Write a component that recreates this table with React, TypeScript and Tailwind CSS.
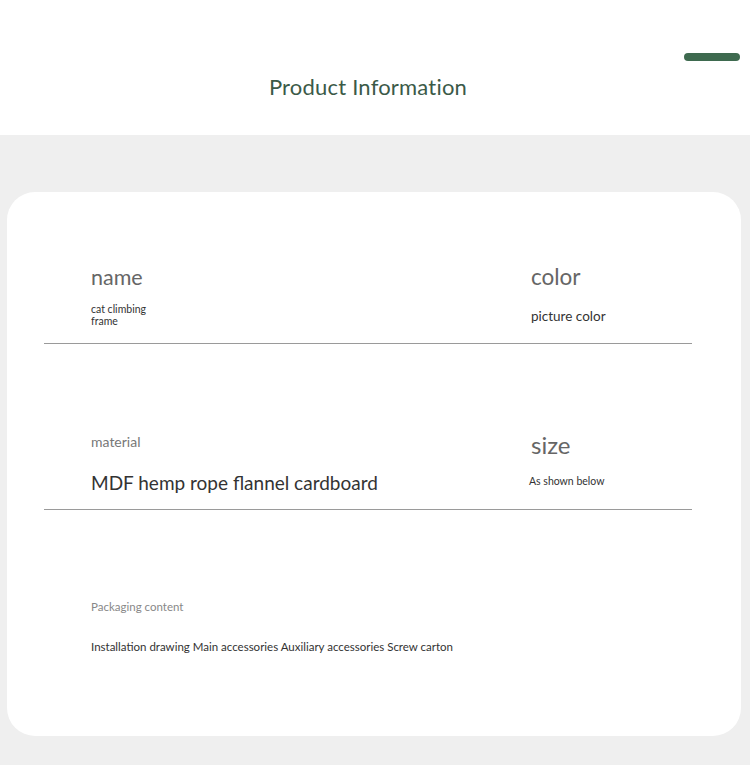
import React from "react";

export default function App() {
  const font = { fontFamily: "Lato, 'Noto Sans', sans-serif" };
  return (
    <div className="w-[750px] h-[765px] bg-[#efefef] overflow-hidden" style={font}>
      <div className="h-[135px] bg-white relative flex justify-center">
        <div className="absolute right-[10px] top-[53px] w-[56px] h-[8px] rounded-full bg-[#3e6a4f]" />
        <div className="pt-[73px] pr-[14px] text-[22px] leading-[28px] text-[#3b5a48] tracking-[0.2px]">Product Information</div>
      </div>
      <div className="pt-[57px] pl-[7px]">
        <div className="w-[734px] h-[544px] bg-white rounded-[28px] px-[37px] pt-[72px] flex flex-col">
          <div className="w-[648px] h-[80px] border-b border-[#9a9a9a] grid grid-cols-[487px_1fr]">
            <div className="pl-[47px]">
              <div className="text-[21.5px] leading-[26px] text-[#666]">name</div>
              <div className="mt-[13px] w-[70px] text-[10.5px] leading-[12px] text-[#333]">cat climbing frame</div>
            </div>
            <div>
              <div className="text-[22.5px] leading-[26px] text-[#666]">color</div>
              <div className="mt-[18px] text-[13.5px] leading-[16px] text-[#333]">picture color</div>
            </div>
          </div>
          <div className="w-[648px] h-[166px] border-b border-[#9a9a9a] grid grid-cols-[487px_1fr] pt-[89px]">
            <div className="pl-[47px]">
              <div className="text-[14px] leading-[18px] text-[#777]">material</div>
              <div className="mt-[20px] text-[19px] leading-[24px] text-[#333]">MDF hemp rope flannel cardboard</div>
            </div>
            <div className="-mt-[2px]">
              <div className="text-[24px] leading-[28px] text-[#666]">size</div>
              <div className="mt-[15px] -ml-[2px] text-[10.5px] leading-[14px] text-[#333]">As shown below</div>
            </div>
          </div>
          <div className="pl-[47px] pt-[90px]">
            <div className="text-[11.5px] leading-[14px] text-[#888]">Packaging content</div>
            <div className="mt-[26px] text-[11.5px] leading-[14px] text-[#333]">Installation drawing Main accessories Auxiliary accessories Screw carton</div>
          </div>
        </div>
      </div>
    </div>
  );
}
